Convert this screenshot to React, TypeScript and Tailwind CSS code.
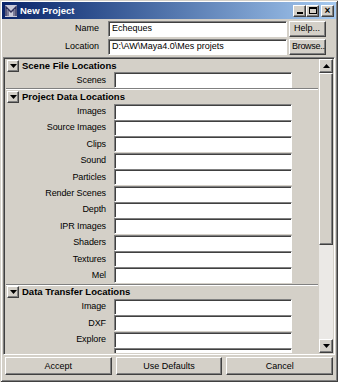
import React from "react";

const raised =
  "bg-[#d4d0c8] border-t border-l border-t-white border-l-white border-b border-r border-b-[#404040] border-r-[#404040] shadow-[inset_-1px_-1px_0_#808080]";
const sunken =
  "bg-white border-t border-l border-t-[#808080] border-l-[#808080] border-b border-r border-b-white border-r-white shadow-[inset_1px_1px_0_#404040]";

function Tri({ up }: { up?: boolean }) {
  return (
    <svg width="7" height="4" viewBox="0 0 7 4">
      {up ? <path d="M3.5 0 L7 4 L0 4 Z" fill="#000" /> : <path d="M0 0 L7 0 L3.5 4 Z" fill="#000" />}
    </svg>
  );
}

function Header({ title, sep }: { title: string; sep?: boolean }) {
  return (
    <div className="flex flex-col">
      {sep && <div className="h-[2px] border-t border-t-[#808080] border-b border-b-white mr-[1px]" />}
      <div className="h-[13px] flex items-center gap-[3px] pl-[1px]">
        <div className={`${raised} w-[12px] h-[12px] flex items-center justify-center`}>
          <Tri />
        </div>
        <span className="font-bold text-[9.5px] leading-none">{title}</span>
      </div>
    </div>
  );
}

function Row({ label }: { label: string }) {
  return (
    <div className="h-[16.4px] flex items-center shrink-0">
      <div className="w-[100px] text-right text-[9px] leading-none tracking-[-0.1px]">{label}</div>
      <div className={`${sunken} ml-[8px] w-[178px] h-[16px]`} />
    </div>
  );
}

export default function App() {
  return (
    <div
      className="w-[338px] h-[382px] bg-[#d4d0c8] flex flex-col text-black shadow-[inset_1px_1px_0_#d4d0c8,inset_-1px_-1px_0_#404040,inset_2px_2px_0_#ffffff,inset_-2px_-2px_0_#808080] p-[2px] overflow-hidden"
      style={{ fontFamily: '"Liberation Sans", Arial, sans-serif' }}
    >
      {/* Title bar */}
      <div className="h-[17px] flex items-center bg-gradient-to-r from-[#0a246a] to-[#a6caf0] pl-[2px] pr-[2px] shrink-0">
        <svg width="14" height="14" viewBox="0 0 14 14" className="mr-[2px]">
          <rect x="1" y="1" width="12" height="12" fill="#c8c8d8" />
          <path d="M2 12 L2 3 L7 8 L12 3 L12 12" stroke="#30305a" strokeWidth="1.5" fill="none" />
          <path d="M4 12 L4 6 M10 12 L10 6" stroke="#30305a" strokeWidth="1" />
        </svg>
        <span className="text-white font-bold text-[9.5px] leading-none flex-1">New Project</span>
        <div className="flex items-center">
          <div className={`${raised} w-[13px] h-[12px] flex items-end justify-center pb-[2px]`}>
            <div className="w-[6px] h-[2px] bg-black" />
          </div>
          <div className={`${raised} w-[13px] h-[12px] flex items-center justify-center`}>
            <div className="w-[8px] h-[7px] border border-black border-t-2" />
          </div>
          <div className={`${raised} w-[13px] h-[12px] flex items-center justify-center ml-[2px] text-[10px] font-bold leading-none`}>
            ×
          </div>
        </div>
      </div>

      {/* Name / Location */}
      <div className="flex flex-col gap-[1px] mt-[1px] shrink-0">
        <div className="flex items-center h-[17px]">
          <div className="w-[97px] text-right text-[9px] leading-none">Name</div>
          <div className={`${sunken} ml-[9px] w-[179px] h-[16px] flex items-center pl-[3px] text-[9px] leading-none`}>
            Echeques
          </div>
          <div className={`${raised} ml-[2px] w-[37px] h-[16px] flex items-center pl-[4px] text-[9px] leading-none`}>
            Help...
          </div>
        </div>
        <div className="flex items-center h-[17px]">
          <div className="w-[97px] text-right text-[9px] leading-none">Location</div>
          <div className={`${sunken} ml-[9px] w-[179px] h-[16px] flex items-center pl-[3px] text-[9px] leading-none`}>
            D:\AW\Maya4.0\Mes projets
          </div>
          <div className={`${raised} ml-[2px] w-[37px] h-[16px] flex items-center pl-[2px] text-[9px] leading-none tracking-[-0.3px] whitespace-nowrap overflow-hidden`}>
            Browse...
          </div>
        </div>
      </div>

      {/* Scroll pane */}
      <div className="mt-[2px] mx-[1px] h-[298px] shrink-0 flex border-t border-l border-t-[#808080] border-l-[#808080] border-b border-r border-b-white border-r-white shadow-[inset_1px_1px_0_#404040] p-[1px]">
        <div className="flex-1 overflow-hidden flex flex-col pl-[1px]">
          <Header title="Scene File Locations" />
          <Row label="Scenes" />
          <Header title="Project Data Locations" sep />
          {["Images", "Source Images", "Clips", "Sound", "Particles", "Render Scenes", "Depth", "IPR Images", "Shaders", "Textures", "Mel"].map((l) => (
            <Row key={l} label={l} />
          ))}
          <Header title="Data Transfer Locations" sep />
          {["Image", "DXF", "Explore", "Edit"].map((l) => (
            <Row key={l} label={l === "Edit" ? "" : l} />
          ))}
        </div>
        {/* Scrollbar */}
        <div className="w-[14px] flex flex-col bg-[#ebe9e6]">
          <div className={`${raised} h-[14px] flex items-center justify-center`}>
            <Tri up />
          </div>
          <div className={`${raised} h-[172px]`} />
          <div className="flex-1" />
          <div className={`${raised} h-[14px] flex items-center justify-center`}>
            <Tri />
          </div>
        </div>
      </div>

      {/* Bottom buttons */}
      <div className="flex gap-[4px] px-[3px] mt-[2px] shrink-0">
        {["Accept", "Use Defaults", "Cancel"].map((b) => (
          <div key={b} className={`${raised} flex-1 h-[18px] flex items-center justify-center text-[9px] leading-none`}>
            {b}
          </div>
        ))}
      </div>
    </div>
  );
}
